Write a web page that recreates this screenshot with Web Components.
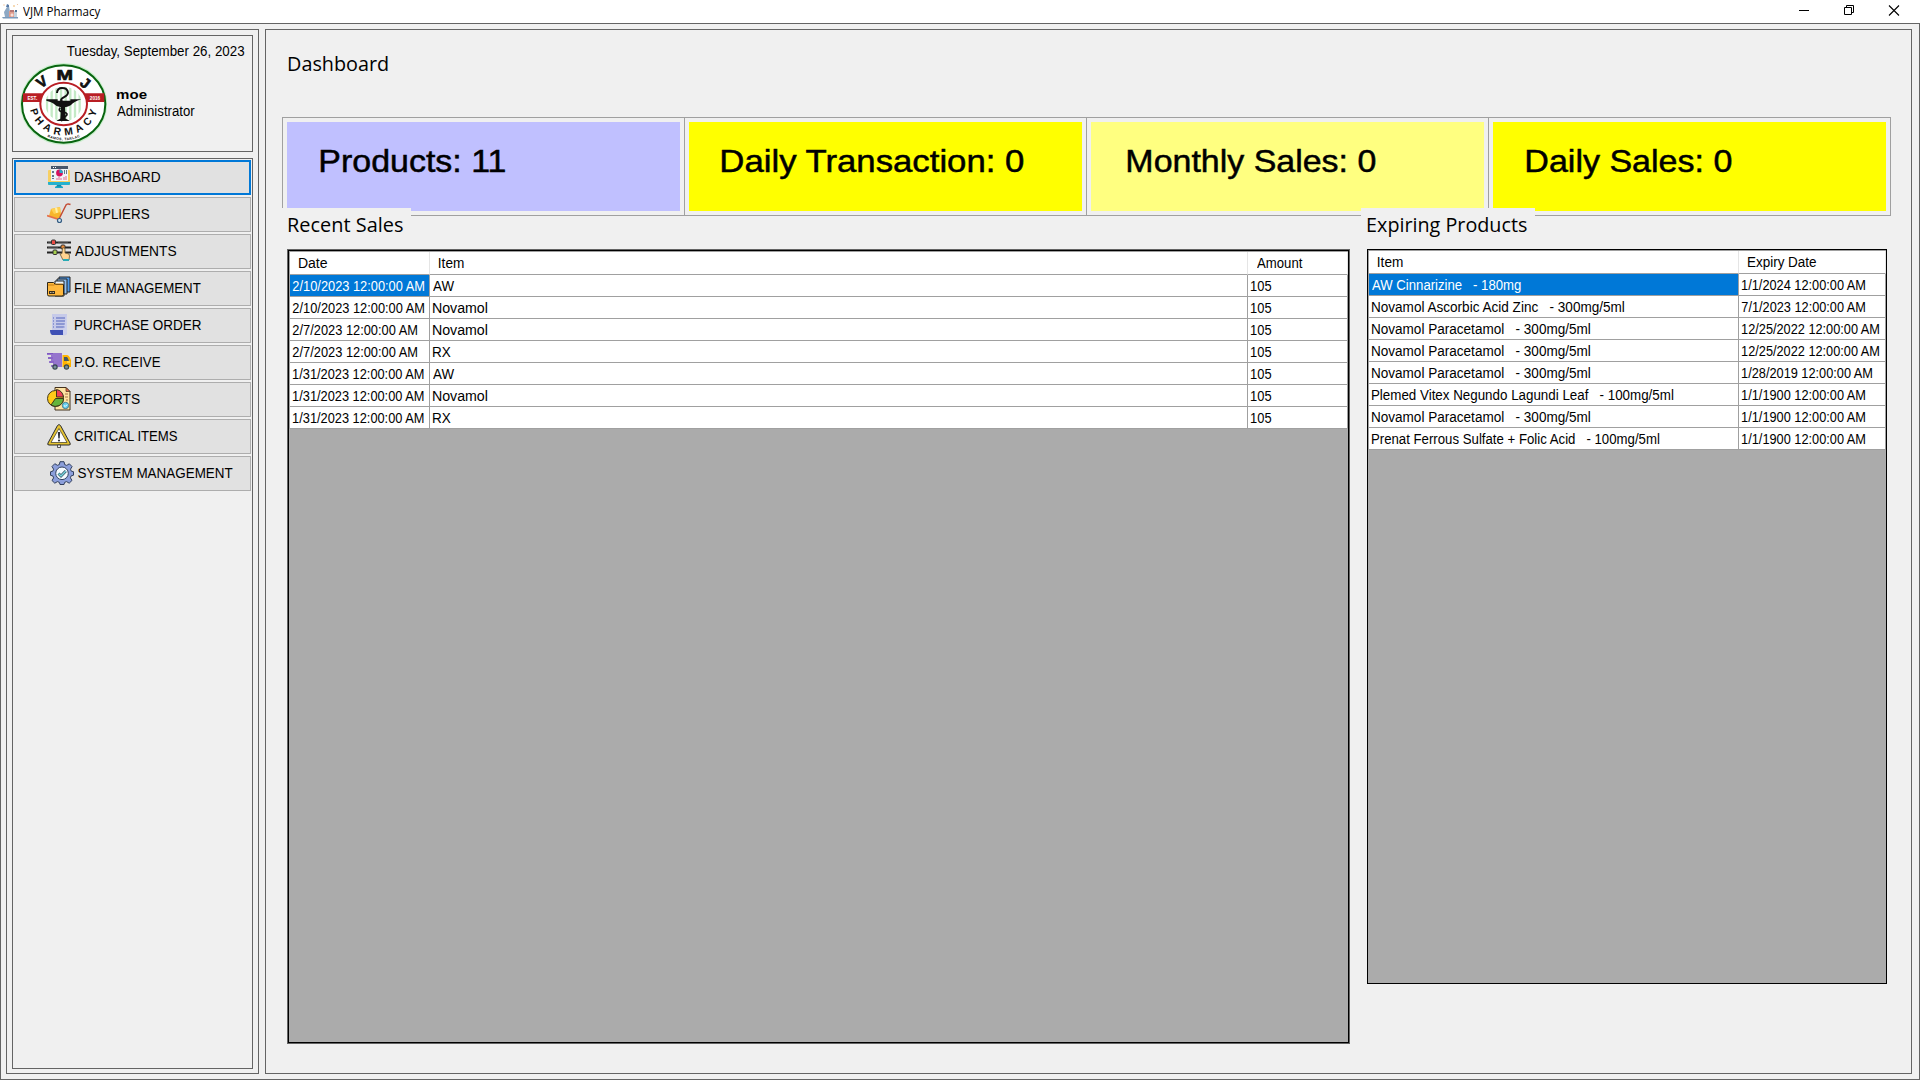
<!DOCTYPE html>
<html lang="en"><head><meta charset="utf-8"><title>VJM Pharmacy</title>
<style>
html,body{margin:0;height:100%;overflow:hidden}
body{font:14px/16px "Liberation Sans",Arial,sans-serif;color:#000;background:#f0f0f0}
</style></head><body>
<app-window></app-window>
<script>
const tpl=(css,html)=>{const t=document.createElement('template');t.innerHTML=`<style>:host{display:block;box-sizing:border-box}*{box-sizing:border-box}${css}</style>${html}`;return t};
const define=(name,css,html,after)=>{const t=tpl(css,html);customElements.define(name,class extends HTMLElement{
  connectedCallback(){if(this.shadowRoot)return;this.attachShadow({mode:'open'}).append(t.content.cloneNode(true));if(after)after(this,this.shadowRoot)}})};

/* label whose ink starts at its left edge and spans w pixels */
const ctx=document.createElement('canvas').getContext('2d');
define('fit-text',':host{display:block;white-space:pre;width:max-content;transform-origin:0 0}','<slot></slot>',el=>{
  const s=getComputedStyle(el),t=el.textContent,w=+el.getAttribute('w'),size=parseFloat(s.fontSize);
  ctx.font=`${s.fontWeight} ${size*10}px ${s.fontFamily}`;
  const m=ctx.measureText(t),l=-m.actualBoundingBoxLeft/10,adv=m.width/10,ink=m.actualBoundingBoxRight/10-l;
  const real=el.getBoundingClientRect().width||adv,k=real/adv;
  el.style.transform=`scaleX(${w/(ink*k)}) translateX(${-l*k}px)`;
});

const icons={
dashboard:`<path d="M1 6q0-1 1-1h20q1 0 1 1v14H1z" fill="#f7cf63"/><path d="M1 17h22v2q0 1-1 1H2q-1 0-1-1z" fill="#25b1cf"/><path d="M4 2h17v14H4z" fill="#eef5f9"/><path d="M4 1h17v3H4z" fill="#46566b"/><path d="M6 2.500h1M8 2.500h1" stroke="#fff"/><path d="M5 6h2v2H5zM5 10h2v2H5zM5 13h2v1H5z" fill="#62798e"/><circle cx="12.500" cy="8" r="3.400" fill="#d5125d"/><path d="M12.500 8V4.500a3.500 3.500 0 0 1 3.400 3.500z" fill="#26aac8"/><path d="M17.500 5v4M19.500 5v4" stroke="#68788c"/><path d="M10 13v2M12 12v3M14 13v2M17 12v3M19 11v4" stroke="#e76a8b"/><path d="M10 20h4l1 2H9z" fill="#168aa6"/><path d="M8 22.300h8" stroke="#1ba7c7" stroke-width="1.500"/>`,
suppliers:`<path d="M4 7l9-2 1 8-3 4-9-3z" fill="#f7b52c"/><path d="M4 7l9-2 .5 5L7 12z" fill="#ffd052"/><path d="M8 6l1 5 2-.5-1-5z" fill="#fff0a6"/><path d="M12 17L18.500 4q1-3 5-1.500" fill="none" stroke="#c34c35" stroke-width="1.500"/><path d="M0 13.500l12 4" stroke="#e56e48" stroke-width="1.700"/><circle cx="12.500" cy="18.500" r="2" fill="#d4e5f0" stroke="#365d83" stroke-width="1.200"/>`,
adjustments:`<path d="M0 3.500h24M0 8.500h24M0 13.500h24" stroke="#222" stroke-width="2"/><path d="M1 3.200h3M11 3.200h10M1 8.200h10" stroke="#777" stroke-width=".6"/><rect x="4.500" y="1" width="4" height="4.500" rx="1" fill="#eb4c45" stroke="#333"/><rect x="14" y="6" width="4" height="4" rx="1" fill="#f18d37" stroke="#333"/><rect x="6" y="11" width="4" height="4.500" rx="1" fill="#a6cf50" stroke="#333"/><path d="M15.500 9q2-1 2.500 1v4l4 1q1 1 0 6h-6l-2-4-1-2 2-.5z" fill="#ffd390" stroke="#653" stroke-width=".8"/><path d="M16 20h6v2h-6z" fill="#28abb5"/>`,
file:`<path d="M12 1h11v15H12z" fill="#4e99e9" stroke="#222"/><path d="M10 3h10v15H10z" fill="#90bff0" stroke="#222"/><path d="M8 5h9v15H8z" fill="#e7f4ff" stroke="#222"/><path d="M.5 6.500h6l2 2h8v10q0 1.500-1.500 1.500H2Q.5 20 .5 18.500z" fill="#ffb83d" stroke="#2b2417"/><path d="M.8 9h6l2-1h7" fill="none" stroke="#c27e17"/><path d="M2 15h6v3H2z" fill="#372d1d"/><path d="M3 16.500h4" stroke="#fff0cc" stroke-width=".7" stroke-dasharray="1 .5"/>`,
purchase:`<path d="M5 1h15v20q-2 2-5 1H5z" fill="#c6cae9"/><path d="M6 5h1M9 5h9M6 8h1M9 8h9M6 11h1M9 11h9M6 14h1M9 14h9" stroke="#7986cb" stroke-width="1.300"/><path d="M3 17h13v5H5q-2-1-2-5z" fill="#3f51b5"/><path d="M16 17v4q2 3 4-1V1z" fill="#d4d8f2" opacity=".5"/>`,
receive:`<path d="M2 3h13v14H4v-2h2v-2H2v-2h2V9H1V7h3V5H0V3z" fill="#9575cd"/><path d="M0 3.500h6M1 8h5M3 12h4" stroke="#7e57c2"/><path d="M15.500 5h4.500q2 0 4 5v7h-8.500z" fill="#ffb300"/><path d="M17 7h3q1 1 2 4h-5z" fill="#455a64"/><path d="M20 12h3" stroke="#fff176"/><circle cx="8" cy="17" r="2.100" fill="#78909c" stroke="#37474f" stroke-width="1.200"/><circle cx="19.500" cy="17" r="2.100" fill="#78909c" stroke="#37474f" stroke-width="1.200"/>`,
reports:`<path d="M8 .5h11l4 4v18.500H8z" fill="#ffe3a2" stroke="#43321d"/><path d="M19 .5v4h4z" fill="#e9664a" stroke="#43321d" stroke-width=".7"/><path d="M18 7h3M18 10h3M19 13h2" stroke="#aa7448"/><circle cx="8.500" cy="11.500" r="8" fill="#ffca19" stroke="#40371b"/><path d="M8.500 11.500h8a8 8 0 0 1-12.500 6.500z" fill="#64b43a" stroke="#40371b"/><path d="M9.500 10V2.500q6 1 7 7.500z" fill="#ef4057" stroke="#40371b"/><circle cx="18.500" cy="18.500" r="3.200" fill="#67d2ef" stroke="#37677b" stroke-width=".8"/><path d="M17 18.500l1.200 1 2-2" fill="none" stroke="#fff"/>`,
critical:`<path d="M12 .7q1 0 1.600 1L23 19q1 2-1 2H2q-2 0-1-2L10.400 1.700Q11 .7 12 .7z" fill="#e6c432" stroke="#292b31"/><path d="M12 4.500L20 18.500H4z" fill="#fff" stroke="#4e492e" stroke-width=".8"/><path d="M10.800 8h2.400l-.5 6.500h-1.400z" fill="#30333a"/><circle cx="12" cy="16.500" r="1.100" fill="#30333a"/><path d="M10.500 21h3v2.500h-3z" fill="#eee" stroke="#333" stroke-width=".8"/>`,
system:`<path d="M10 .7h4l.7 2.900 2 .8 2.600-1.600 2.800 2.800-1.600 2.600.8 2 2.200.5v3.500l-2.300.6-.8 2 1.600 2.600-2.800 2.800-2.600-1.600-2 .8-.6 2.100h-4l-.6-2.100-2-.8-2.600 1.600L2 19.500l1.600-2.600-.8-2-2.300-.6v-3.500l2.300-.6.8-2L2 5.500l2.800-2.800 2.600 1.600 2-.8z" fill="#8c9fdb" stroke="#32405e"/><circle cx="12" cy="12.300" r="6.300" fill="#f4fbff" stroke="#32405e"/><path d="M8.500 12.500l2.500 2.500 4.800-5" fill="none" stroke="#365367" stroke-width="2.800"/><path d="M8.500 12.500l2.500 2.500 4.800-5" fill="none" stroke="#78d6dc" stroke-width="1.300"/>`};

define('title-bar',`:host{height:23px;background:#fff;display:flex;align-items:flex-start;font:12px/17px "Open Sans","Noto Sans",sans-serif}
.app{width:17px;height:16px;margin:3px 4px 0 2px}fit-text{margin-top:3px}.ctl{display:flex;margin-left:auto;padding-right:3px}.ctl svg{width:45px;height:21px}`,
`<svg class="app" viewBox="0 0 17 16"><path d="M3 14L2 9l3-5 2-1 1 6-1 6z" fill="#8da8c4"/><path d="M4 4l1-3 2 1v2z" fill="#5779a4"/><path d="M7 8h6v7H7z" fill="#df9d8d"/><path d="M8 7h4v2H8z" fill="#b77875"/><path d="M8.500 12h3M10 10.500v3" stroke="#fff3ee" stroke-width="1.100"/><path d="M12 8h3v7h-3z" fill="#c4d3df"/><path d="M13 7h2v2h-2z" fill="#4f7295"/><path d="M0 14h16v1.500H1z" fill="#7a9abb"/><circle cx="12" cy="3" r=".9" fill="#f2c890"/><circle cx="15.500" cy="1.500" r=".6" fill="#edbb99"/><circle cx="2" cy="2" r=".7" fill="#f0bf8d"/></svg>
<fit-text w="77.500">VJM Pharmacy</fit-text><div class="ctl"><svg viewBox="0 0 45 21"><path d="M17 10.500h10" stroke="#000"/></svg><svg viewBox="0 0 45 21"><path d="M17.500 7.500h7v7h-7zM19.500 7.500v-2h7v7h-2" fill="none" stroke="#000"/></svg><svg viewBox="0 0 45 21"><path d="M17 5.500l10 10M27 5.500l-10 10" stroke="#000" stroke-width="1.100"/></svg></div>`);

define('group-panel',':host{border:1px solid #646464}','<slot></slot>');

define('pharmacy-logo',':host{width:88px;height:84px}svg{display:block;width:88px;height:84px}text{font-family:"Liberation Sans",sans-serif;font-weight:bold}',
`<svg viewBox="56 185 264 252"><defs><path id="low" d="M88 311a102 94 0 0 0 204 0"/><path id="foot" d="M77 311a113 109 0 0 0 226 0"/><clipPath id="c"><ellipse cx="190" cy="311" rx="55" ry="52"/></clipPath></defs>
<ellipse cx="190" cy="311" rx="131" ry="123" fill="#c9efcc"/><ellipse cx="190" cy="311" rx="125" ry="116" fill="#fff" stroke="#08640f" stroke-width="6"/>
<path d="M68 279h244v26H67z" fill="#b91e24"/><ellipse cx="190" cy="311" rx="70" ry="64" fill="#fff" stroke="#b91e24" stroke-width="6"/>
<g clip-path="url(#c)"><path d="M140 250v120M154 250v120M168 250v120M182 250v120M196 250v120M210 250v120M224 250v120M238 250v120" stroke="#c3eac5" stroke-width="7"/></g>
<path d="M138 297h34v4h38v-4h33q-24 8-31 17-9 6-18 7l2 34q7 2 12 7h-40q6-5 12-7l2-34q-15-2-24-12-6-5-20-8z" fill="#111"/>
<path d="M170 278q1-15 15-15 16 0 18 13c1 15-22 13-21 24 2 8 25 5 25 15" fill="none" stroke="#111" stroke-width="6"/><path d="M180 322q-10 10 9 13 20 5 5 14-16 8-8 13" fill="none" stroke="#111" stroke-width="5"/>
<g font-size="44" text-anchor="middle" fill="#111" stroke="#111" stroke-width="2"><text transform="translate(133 257) rotate(-35)">V</text><text transform="translate(193 238) scale(1.350 1)">M</text><text transform="translate(246 260) rotate(37)">J</text></g>
<g fill="#fff" font-size="14" text-anchor="middle"><text x="96" y="298">EST.</text><text x="284" y="298">2016</text></g>
<text font-size="31" fill="#111"><textPath href="#low" startOffset="17" textLength="270">PHARMACY</textPath></text>
<text font-size="10.500" fill="#111"><textPath href="#foot" startOffset="50%" text-anchor="middle" textLength="101">RAMOS, TARLAC</textPath></text></svg>`);

define('user-card',`:host{height:117px;border:1px solid #646464;padding:7px 8px 0 6px}.date{margin-left:48px}.row{display:flex;gap:10px;margin-top:3px}.who{padding-top:25px}.b{font-size:13px;font-weight:bold}`,
`<fit-text class="date" w="177">Tuesday, September 26, 2023</fit-text><div class="row"><pharmacy-logo></pharmacy-logo><div class="who"><fit-text class="b" w="29.500">moe</fit-text><fit-text w="77.500">Administrator</fit-text></div></div>`);

define('nav-button',`:host{height:35px;background:#e1e1e1;border:1px solid #adadad;display:flex;align-items:center;gap:3.500px;padding:0 0 1px 32px}
:host([active]){border:2px solid #0078d7;padding-left:31px}:host([wide]){padding-left:35px}svg{width:24px;height:24px;flex:none}`,
'<svg viewBox="0 0 24 24"></svg><slot></slot>',(el,r)=>r.querySelector('svg').innerHTML=icons[el.getAttribute('icon')]);

define('stat-card',`:host{padding:4px;border-right:1px solid #a0a0a0;flex:1}div{height:89px;background:var(--tone);padding:21px 0 0 var(--ink);font-size:32px;line-height:36px;-webkit-text-stroke:.5px #000}`,'<div><slot></slot></div>');

define('section-label',`:host{height:41px;position:relative;background:#f0f0f0;font:20.800px/32px "Open Sans","Noto Sans",sans-serif;padding-left:6.700px}`,'<slot></slot>');

define('data-grid',`:host{background:#ababab;border:1px solid #000}:host([double]){border:2px solid #000;outline:1px solid #646464;outline-offset:-1px}
.g{display:grid;border-top:1px solid #a0a0a0;border-left:1px solid #a0a0a0}
.c{height:22px;line-height:22px;background:#fff;border-right:1px solid #a0a0a0;border-bottom:1px solid #a0a0a0;padding-left:3.300px;overflow:hidden}
.h{height:23px;padding-left:8.500px;border-right-color:#e5e5e5}.s{background:#0078d7;color:#fff}`,'<div class="g"></div>',(el,r)=>{
  const d=grids[el.getAttribute('name')],g=r.querySelector('.g');g.style.gridTemplateColumns=d.cols;
  d.rows.forEach((row,i)=>row.forEach((t,j)=>{const c=document.createElement('div');c.className='c'+(i?'':' h')+(i==1&&!j?' s':'');
    const f=document.createElement('fit-text');f.textContent=t;f.setAttribute('w',widths[t]);c.append(f);g.append(c)}));
});
const A=' 12:00:00 AM',np='Novamol Paracetamol   - 300mg/5ml';
const grids={
sales:{cols:'140px 818px 100px',rows:[['Date','Item','Amount'],['2/10/2023'+A,'AW','105'],['2/10/2023'+A,'Novamol','105'],['2/7/2023'+A,'Novamol','105'],['2/7/2023'+A,'RX','105'],['1/31/2023'+A,'AW','105'],['1/31/2023'+A,'Novamol','105'],['1/31/2023'+A,'RX','105']]},
expiry:{cols:'370px 147px',rows:[['Item','Expiry Date'],['AW Cinnarizine   - 180mg','1/1/2024'+A],['Novamol Ascorbic Acid Zinc   - 300mg/5ml','7/1/2023'+A],[np,'12/25/2022'+A],[np,'12/25/2022'+A],[np,'1/28/2019'+A],['Plemed Vitex Negundo Lagundi Leaf   - 100mg/5ml','1/1/1900'+A],[np,'1/1/1900'+A],['Prenat Ferrous Sulfate + Folic Acid   - 100mg/5ml','1/1/1900'+A]]}};
const widths={Date:28,Item:24.500,Amount:45.300,'Expiry Date':68,AW:21,RX:17.500,Novamol:54,105:20,[np]:218,
['2/10/2023'+A]:131,['2/7/2023'+A]:124,['1/31/2023'+A]:130.500,['1/1/2024'+A]:123,['7/1/2023'+A]:123,['1/1/1900'+A]:123,['12/25/2022'+A]:137,['1/28/2019'+A]:130,
'AW Cinnarizine   - 180mg':148.500,'Novamol Ascorbic Acid Zinc   - 300mg/5ml':252,'Plemed Vitex Negundo Lagundi Leaf   - 100mg/5ml':301,'Prenat Ferrous Sulfate + Folic Acid   - 100mg/5ml':287};

define('side-bar',`:host{width:253px;border:1px solid #646464;padding:5px 5px 4px;display:flex;flex-direction:column;gap:6px}group-panel{flex:1;padding:1px}nav{display:flex;flex-direction:column;gap:2px}`,
`<user-card></user-card><group-panel><nav>${[['dashboard','DASHBOARD',85,'active'],['suppliers','SUPPLIERS',74],['adjustments','ADJUSTMENTS',101],['file','FILE MANAGEMENT',125.5],['purchase','PURCHASE ORDER',126],['receive','P.O. RECEIVE',85],['reports','REPORTS',64.5],['critical','CRITICAL ITEMS',102],['system','SYSTEM MANAGEMENT',154.5,'wide']].map(([i,t,w,a=''])=>`<nav-button icon="${i}" ${a}><fit-text w="${w}">${t}</fit-text></nav-button>`).join('')}</nav></group-panel>`);

define('dashboard-view',`:host{width:1647px;border:1px solid #646464;padding-left:16px}
.title{height:87px;padding:18px 0 0 6.700px;font:20.800px/30px "Open Sans","Noto Sans",sans-serif}
.stats{width:1609px;height:99px;display:flex;border:1px solid #a0a0a0;border-right:0}
.cols{display:flex;gap:11px;margin-top:-8px}.sales section-label{width:129px}.exp section-label{width:174px}
.sales data-grid{width:1063px;height:795px;margin-left:5px}.exp data-grid{width:520px;height:735px;margin-left:6px}`,
`<div class="title"><fit-text w="98.500">Dashboard</fit-text></div>
<div class="stats"><stat-card style="--tone:#c0c0ff;--ink:33.500px"><fit-text w="184">Products: 11</fit-text></stat-card><stat-card style="--tone:#ffff00;--ink:33px"><fit-text w="301.500">Daily Transaction: 0</fit-text></stat-card><stat-card style="--tone:#ffff80;--ink:37px"><fit-text w="247.500">Monthly Sales: 0</fit-text></stat-card><stat-card style="--tone:#ffff00;--ink:33.500px"><fit-text w="204.500">Daily Sales: 0</fit-text></stat-card></div>
<div class="cols"><div class="sales"><section-label><fit-text w="113.500">Recent Sales</fit-text></section-label><data-grid double name="sales"></data-grid></div>
<div class="exp"><section-label><fit-text w="158.500">Expiring Products</fit-text></section-label><data-grid name="expiry"></data-grid></div></div>`);

define('app-window',`:host{width:1920px;height:1080px;display:flex;flex-direction:column}.body{flex:1;border:1px solid #646464;padding:5px;display:flex;gap:6px;background:#f0f0f0}`,
`<title-bar></title-bar><div class="body"><side-bar></side-bar><dashboard-view></dashboard-view></div>`);
</script></body></html>
